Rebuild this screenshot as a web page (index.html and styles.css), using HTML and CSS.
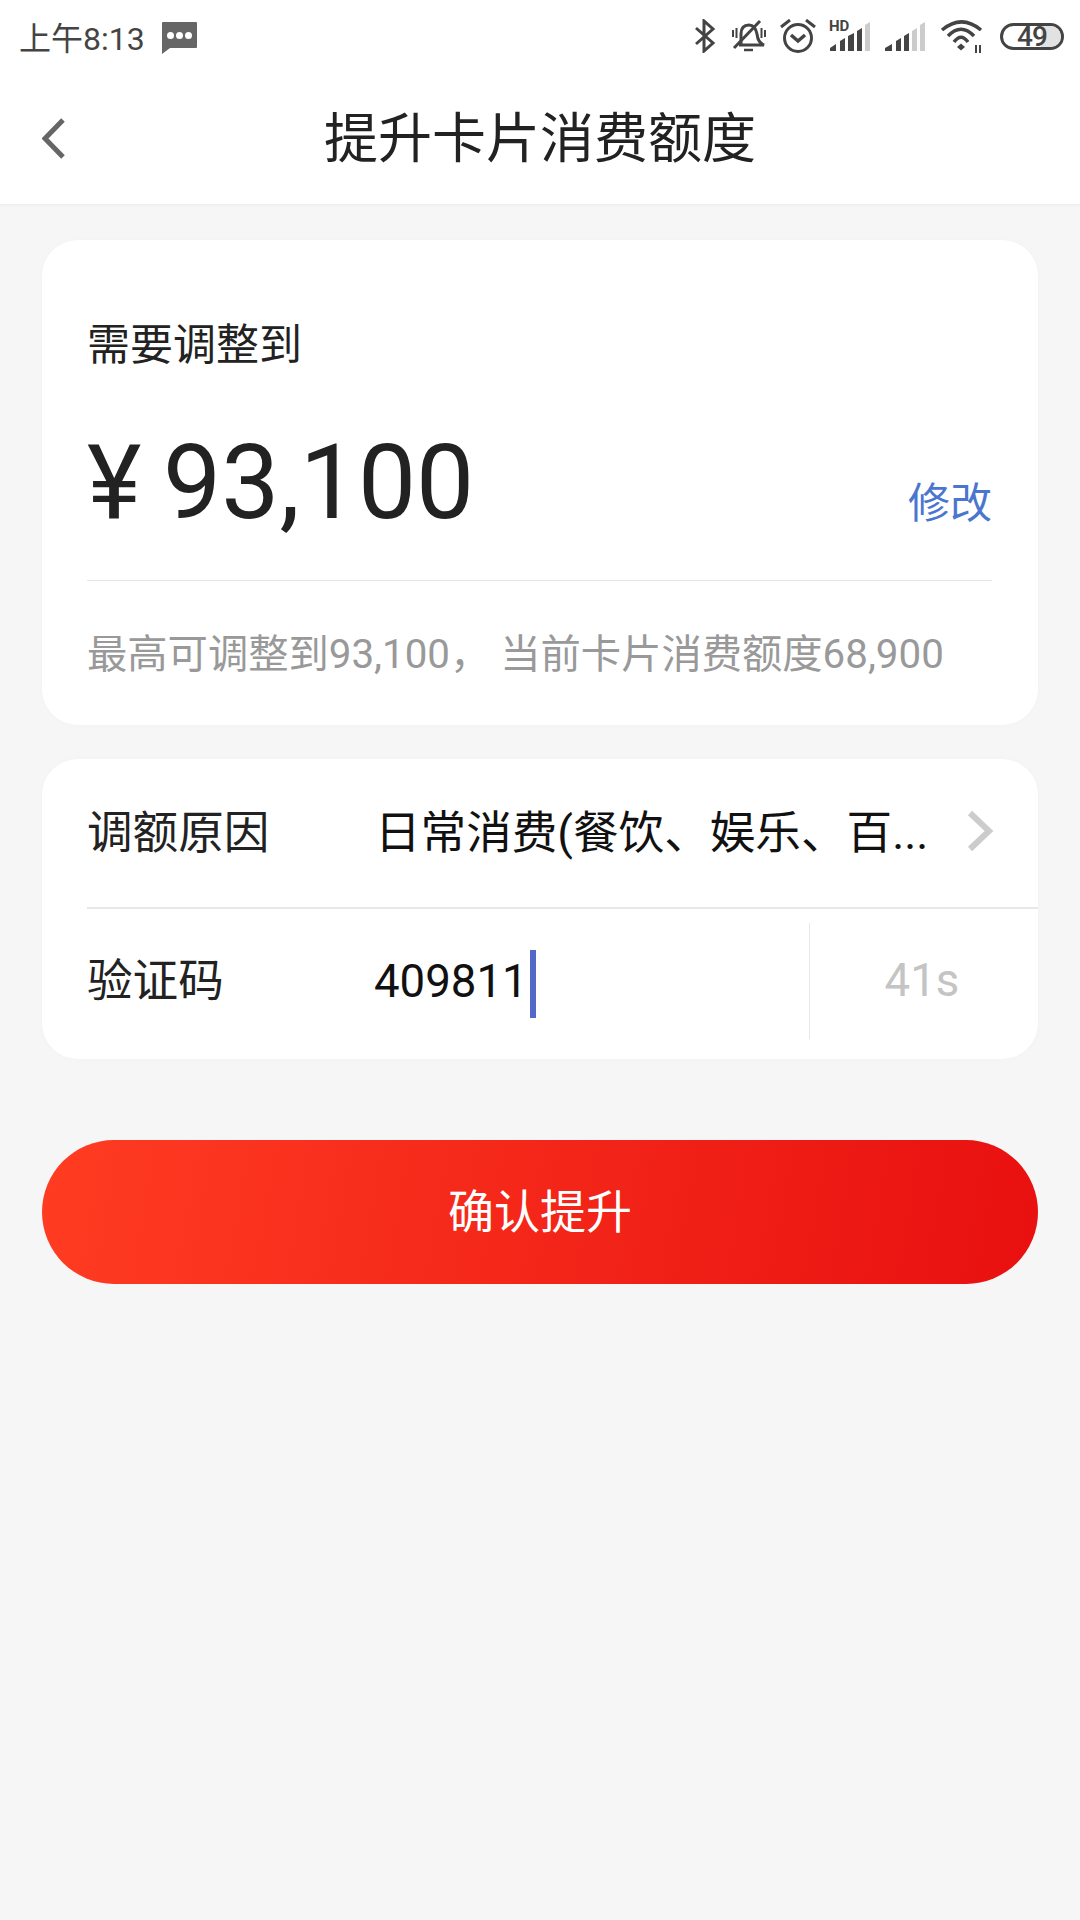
FILE: index.html
```html
<!doctype html>
<html>
  <head>
    <title>提升卡片消费额度</title>
    <link rel="stylesheet" href="styles.css">
  </head>
  <body>
    <div class="header">
      <div class="status-bar">
        <div class="status-left">
          <span class="time">上午8:13</span>
          <svg class="msg-icon" width="35" height="32" viewBox="0 0 35 32">
            <path d="M1 0H34a1 1 0 0 1 1 1V25a1 1 0 0 1-1 1H8L0 32V1a1 1 0 0 1 1-1z" fill="#666"/>
            <circle cx="8.500" cy="13.500" r="3.500" fill="#fff"/>
            <circle cx="17.500" cy="13.500" r="3.500" fill="#fff"/>
            <circle cx="26.500" cy="13.500" r="3.500" fill="#fff"/>
          </svg>
        </div>
        <div class="status-right">
          <svg width="22" height="34" viewBox="0 0 22 34" fill="none" stroke="#444" stroke-width="3">
            <path d="M2 9L19 24L10 32V2L19 10L2 25"/>
          </svg>
          <svg class="wide-gap" width="34" height="34" viewBox="0 0 34 34" fill="none" stroke="#444" stroke-width="3">
            <path d="M9 25V15C9 9 12 6 17 6C22 6 24 10 25 15C25.500 20 27 24 32 26H7"/>
            <path d="M28 2L2 29"/>
            <path d="M12 31H21" stroke-width="2.500"/>
            <path d="M1 11V18M4.500 9V19M29.500 9V19M33 11V18" stroke-width="2"/>
          </svg>
          <svg width="36" height="34" viewBox="0 0 36 34" fill="none" stroke="#444" stroke-width="3">
            <circle cx="18" cy="19" r="13.500"/>
            <path d="M11 16L18 22L25 16" stroke-width="3.500"/>
            <path d="M1 8L10 1M35 8L26 1"/>
          </svg>
          <div class="signal">
            <span class="hd">HD</span>
            <svg width="41" height="29" viewBox="0 0 41 29">
              <path d="M0 29V26L6 22V29z" fill="#444"/>
              <path d="M10 29V19L15 16V29z" fill="#444"/>
              <path d="M18 29V14L24 11V29z" fill="#444"/>
              <path d="M27 29V9L32 6V29z" fill="#444"/>
              <path d="M35 29V3L40 0V29z" fill="#ccc"/>
            </svg>
          </div>
          <svg width="41" height="29" viewBox="0 0 41 29">
            <path d="M0 29V26L7 22V29z" fill="#444"/>
            <path d="M11 29V19L16 16V29z" fill="#444"/>
            <path d="M19 29V14L24 11V29z" fill="#444"/>
            <path d="M27 29V9L32 6V29z" fill="#ccc"/>
            <path d="M35 29V3L40 0V29z" fill="#ccc"/>
          </svg>
          <svg width="44" height="36" viewBox="0 0 44 36" fill="none" stroke="#444" stroke-width="3.500">
            <path d="M2 12Q21.500 -4.300 41 12"/>
            <path d="M8 18Q21 4.300 34 18"/>
            <path d="M14 24Q21 14.300 28 24"/>
            <path d="M17 29L21 25.500L25 29L21 32.500z" fill="#444" stroke="none"/>
            <path d="M36 27V35M40 27V35" stroke-width="2"/>
          </svg>
          <div class="battery wide-gap"><div class="battery-fill"></div><span class="battery-num">49</span></div>
        </div>
      </div>
      <div class="nav-bar">
        <svg class="back-icon" width="24" height="42" viewBox="0 0 24 42" fill="none" stroke="#666" stroke-width="5">
          <path d="M21 2L3 20.500L21 39"/>
        </svg>
        <div class="nav-title">提升卡片消费额度</div>
      </div>
    </div>

    <div class="content">
      <div class="card amount-card">
        <div class="amount-label">需要调整到</div>
        <div class="amount-row">
          <div class="amount-value"><span class="yen">¥</span> 93,100</div>
          <a class="edit-link">修改</a>
        </div>
        <div class="amount-hint">最高可调整到93,100， 当前卡片消费额度68,900</div>
      </div>

      <div class="card form-card">
        <div class="form-row reason-row">
          <div class="row-label">调额原因</div>
          <div class="row-value">日常消费(餐饮、娱乐、百...</div>
          <svg class="arrow-icon" width="28" height="42" viewBox="0 0 28 42" fill="none" stroke="#ccc" stroke-width="6">
            <path d="M4 3L23 21L4 39"/>
          </svg>
        </div>
        <div class="form-row code-row">
          <div class="row-label">验证码</div>
          <div class="code-input">409811<span class="caret"></span></div>
          <div class="countdown">41s</div>
        </div>
      </div>

      <div class="confirm-btn">确认提升</div>
    </div>
  </body>
</html>
```

FILE: styles.css
```css
* {
  box-sizing: border-box;
}
body {
  margin: 0;
  width: 1080px;
  height: 1920px;
  background-color: #f6f6f6;
  font-family: Roboto, "Noto Sans CJK SC", sans-serif;
  color: #222;
}
.header {
  height: 204px;
  background-color: white;
  box-shadow: 0 1px 3px rgba(0, 0, 0, 0.05);
}
.status-bar {
  display: flex;
  justify-content: space-between;
  align-items: center;
  height: 72px;
  padding: 0 16px 0 19px;
}
.status-left {
  display: flex;
  align-items: center;
  gap: 17px;
}
.time {
  font-size: 32px;
  color: #444;
}
.msg-icon {
  margin-top: 3px;
}
.status-right {
  display: flex;
  align-items: center;
  gap: 14px;
}
.wide-gap {
  margin-left: 2px;
}
.signal {
  position: relative;
  display: flex;
}
.hd {
  position: absolute;
  left: -1px;
  top: -2px;
  font-size: 15px;
  line-height: 12px;
  font-weight: 700;
  color: #444;
}
.battery {
  position: relative;
  width: 64px;
  height: 27px;
  border: 3px solid #444;
  border-radius: 14px;
  display: flex;
  align-items: center;
  justify-content: center;
}
.battery-fill {
  position: absolute;
  right: 0;
  top: 0;
  bottom: 0;
  width: 20px;
  border-radius: 0 11px 11px 0;
  background-color: #e2e2e2;
}
.battery-num {
  position: relative;
  font-size: 28px;
  line-height: 21px;
  font-weight: 500;
  letter-spacing: -1px;
  color: #444;
}
.nav-bar {
  position: relative;
  display: flex;
  align-items: center;
  justify-content: center;
  height: 132px;
  padding-bottom: 8px;
}
.back-icon {
  position: absolute;
  left: 42px;
  top: 46px;
}
.nav-title {
  font-size: 54px;
  color: #222;
}
.content {
  padding: 36px 42px;
}
.card {
  background-color: white;
  border-radius: 36px;
  box-shadow: 0 0 6px rgba(0, 0, 0, 0.02);
}
.amount-card {
  height: 485px;
  padding: 0 46px 0 45px;
  margin-bottom: 34px;
}
.amount-label {
  padding-top: 80px;
  font-size: 43px;
  line-height: 50px;
}
.amount-row {
  display: flex;
  justify-content: space-between;
  align-items: flex-end;
  height: 211px;
  padding-bottom: 42px;
  border-bottom: 1px solid #e5e5e5;
}
.amount-value {
  font-size: 103.500px;
  line-height: 110px;
}
.yen {
  margin-right: -4px;
}
.edit-link {
  margin-bottom: 9px;
  font-size: 42px;
  line-height: 50px;
  color: #4a76d0;
}
.amount-hint {
  padding-top: 49px;
  font-size: 40.300px;
  line-height: 50px;
  color: #999;
  white-space: nowrap;
}
.form-card {
  height: 300px;
  margin-bottom: 81px;
  padding-left: 45px;
}
.form-row {
  display: flex;
  align-items: center;
}
.reason-row {
  height: 150px;
  border-bottom: 2px solid #e8e8e8;
}
.code-row {
  height: 150px;
  padding-bottom: 6px;
}
.row-label {
  width: 288px;
  margin-bottom: 8px;
  font-size: 45.600px;
}
.row-value {
  flex: 1;
  margin-bottom: 8px;
  font-size: 45.600px;
  color: #111;
  white-space: nowrap;
}
.arrow-icon {
  margin-bottom: 4px;
  margin-right: 44px;
}
.code-input {
  display: flex;
  align-items: center;
  flex: 1;
  font-size: 45.600px;
  color: #111;
  margin-left: -1px;
}
.caret {
  width: 6px;
  height: 68px;
  margin-top: 6px;
  margin-left: 2px;
  background-color: #5468c8;
}
.countdown {
  width: 229px;
  height: 116px;
  padding-right: 4px;
  line-height: 116px;
  text-align: center;
  font-size: 45.600px;
  color: #c4c4c4;
  border-left: 1px solid #e8e8e8;
}
.confirm-btn {
  height: 144px;
  line-height: 144px;
  text-align: center;
  font-size: 46px;
  color: white;
  border-radius: 72px;
  background: linear-gradient(100deg, #ff3c22, #e81010);
}
```
